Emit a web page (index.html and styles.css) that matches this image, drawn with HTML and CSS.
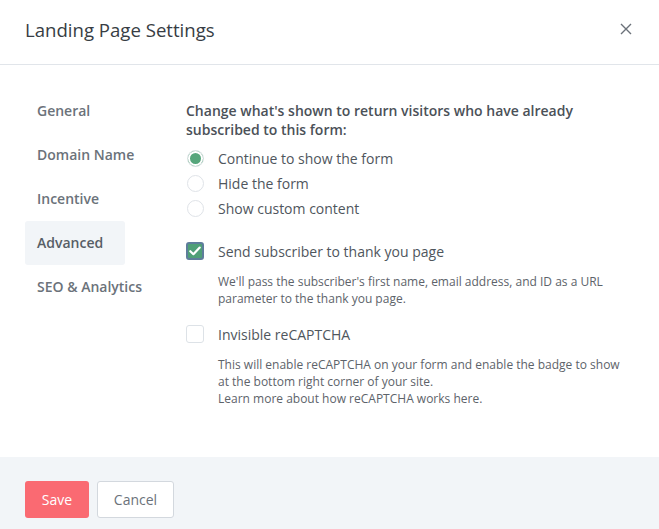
FILE: index.html
```html
<!DOCTYPE html>
<html>
<head>
<meta charset="utf-8">
<link rel="stylesheet" href="styles.css">
</head>
<body>
<div class="modal">
  <header class="header">
    <h1 class="title">Landing Page Settings</h1>
    <span class="close">
      <svg width="12" height="12" viewBox="0 0 12 12"><path d="M1 1L11 11M11 1L1 11" stroke="#6b7179" stroke-width="1.4" fill="none"/></svg>
    </span>
  </header>
  <div class="body">
    <nav class="nav">
      <div class="nav-item">General</div>
      <div class="nav-item">Domain Name</div>
      <div class="nav-item">Incentive</div>
      <div class="nav-item active">Advanced</div>
      <div class="nav-item">SEO &amp; Analytics</div>
    </nav>
    <div class="content">
      <p class="question">Change what's shown to return visitors who have already subscribed to this form:</p>
      <div class="radios">
        <label class="radio-row"><span class="radio checked"></span><span>Continue to show the form</span></label>
        <label class="radio-row"><span class="radio"></span><span>Hide the form</span></label>
        <label class="radio-row"><span class="radio"></span><span>Show custom content</span></label>
      </div>
      <div class="option">
        <div class="check-row">
          <span class="checkbox checked">
            <svg width="12" height="10" viewBox="0 0 12 10"><path d="M1.3 5.2L4.4 8.2L10.7 1.6" stroke="#fff" stroke-width="2.2" fill="none" stroke-linecap="round" stroke-linejoin="round"/></svg>
          </span>
          <span>Send subscriber to thank you page</span>
        </div>
        <p class="desc">We'll pass the subscriber's first name, email address, and ID as a URL parameter to the thank you page.</p>
      </div>
      <div class="option second">
        <div class="check-row">
          <span class="checkbox"></span>
          <span>Invisible reCAPTCHA</span>
        </div>
        <p class="desc">This will enable reCAPTCHA on your form and enable the badge to show at the bottom right corner of your site.<br>Learn more about how reCAPTCHA works here.</p>
      </div>
    </div>
  </div>
  <footer class="footer">
    <button class="btn btn-save">Save</button>
    <button class="btn btn-cancel">Cancel</button>
  </footer>
</div>
</body>
</html>
```
FILE: styles.css
```css
* { box-sizing: border-box; }
html, body { margin: 0; padding: 0; background: #fff; }
body {
  font-family: "Open Sans", "Noto Sans", sans-serif;
  color: #4b5158;
  width: 659px;
  height: 529px;
  overflow: hidden;
}
.modal { display: flex; flex-direction: column; height: 529px; }
.header {
  height: 65px;
  border-bottom: 1px solid #e1e5ea;
  display: flex;
  align-items: center;
  justify-content: space-between;
  padding: 0 27px 0 25px;
}
.title {
  margin: 0;
  font-size: 18.6px;
  font-weight: 400;
  color: #373d44;
  position: relative;
  top: -3px;
}
.close { display: flex; position: relative; top: -3px; }
.body {
  flex: 1;
  display: flex;
  padding: 24px 0 0 25px;
}
.nav { width: 161px; flex-shrink: 0; display: flex; flex-direction: column; }
.nav-item {
  width: 100px;
  height: 44px;
  line-height: 44px;
  padding-left: 12px;
  font-size: 14px;
  font-weight: 600;
  color: #6b727a;
  border-radius: 3px;
  white-space: nowrap;
}
.nav-item.active { background: #f2f5f8; color: #575e66; }
.content { flex: 1; padding-right: 30px; }
.question {
  margin: 0;
  padding-top: 12px;
  font-size: 14px;
  font-weight: 600;
  line-height: 19px;
  color: #4b5158;
}
.radios { margin-top: 7px; display: flex; flex-direction: column; }
.radio-row {
  display: flex;
  align-items: center;
  height: 25px;
  font-size: 14px;
  color: #4f565d;
}
.radio {
  width: 17px;
  height: 17px;
  border: 1px solid #dfe3e8;
  border-radius: 50%;
  margin-left: 1px;
  margin-right: 14px;
  background: #fff;
  flex-shrink: 0;
}
.radio.checked {
  background: #56a67b;
  box-shadow: inset 0 0 0 2px #fff;
  border-color: #e3e6ea;
}
.option { margin-top: 19px; }
.option.second { margin-top: 16px; }
.check-row {
  display: flex;
  align-items: center;
  height: 22px;
  font-size: 14px;
  color: #4f565d;
}
.checkbox {
  width: 18px;
  height: 18px;
  border: 1px solid #dde2e7;
  border-radius: 3px;
  margin-right: 14px;
  background: #fff;
  flex-shrink: 0;
  display: flex;
  align-items: center;
  justify-content: center;
}
.checkbox.checked {
  background: #4f9f77;
  border: 2px solid #5e7d9b;
}
.desc {
  margin: 11px 0 0 32px;
  font-size: 12px;
  line-height: 17px;
  color: #5d636a;
}
.footer {
  height: 72px;
  background: #f2f5f8;
  display: flex;
  align-items: flex-start;
  gap: 8px;
  padding: 24px 25px 0;
}
.btn {
  height: 37px;
  font-family: "Open Sans", "Noto Sans", sans-serif;
  font-size: 14px;
  border-radius: 3px;
  padding: 0;
  cursor: pointer;
}
.btn-save {
  width: 64px;
  background: #fa6a72;
  color: #fff;
  border: none;
}
.btn-cancel {
  width: 77px;
  background: #fff;
  color: #6b727a;
  border: 1px solid #d3d8de;
}
```
